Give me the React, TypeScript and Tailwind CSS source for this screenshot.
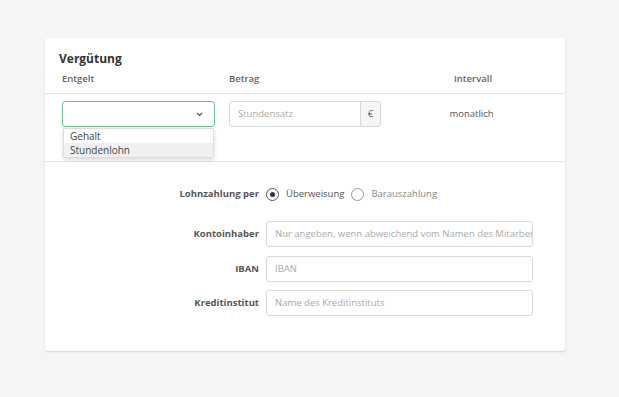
import React from "react";

const font = { fontFamily: '"Open Sans", "Noto Sans", sans-serif' };

const Radio: React.FC<{ checked?: boolean; label: string }> = ({ checked, label }) => (
  <label className="flex items-center gap-[7px]">
    <span
      className={
        "flex h-[13px] w-[13px] items-center justify-center rounded-full border " +
        (checked ? "border-[#555]" : "border-[#999]")
      }
    >
      {checked && <span className="h-[5px] w-[5px] rounded-full bg-[#333]" />}
    </span>
    <span className={checked ? "text-[#555]" : "text-[#888]"}>{label}</span>
  </label>
);

const Field: React.FC<{ label: string; placeholder: string; className?: string }> = ({
  label,
  placeholder,
  className,
}) => (
  <div className={"flex items-center " + (className ?? "")}>
    <div className="w-[221px] pr-[7px] text-right font-bold text-[#555]">{label}</div>
    <div className="flex h-[26px] w-[267px] items-center overflow-hidden whitespace-nowrap rounded-[3px] border border-[#d9d9d9] bg-white px-[8px] text-[#aaa]">
      {placeholder}
    </div>
  </div>
);

const App: React.FC = () => {
  return (
    <div className="h-[397px] w-[619px] overflow-hidden bg-[#f5f5f5] pt-[38px] pl-[45px] text-[9.5px]" style={font}>
      <div className="h-[313px] w-[520px] rounded-[3px] bg-white shadow-[0_1px_2px_rgba(0,0,0,0.15)]">
        <div className="border-b border-[#e3e3e3] px-[14px] pt-[11px] pb-[6px]">
          <h2 className="text-[12px] leading-[20px] font-bold text-[#333]">Vergütung</h2>
          <div className="mt-[2px] flex pl-[3px] leading-[16px] font-semibold text-[#666]">
            <div className="w-[167px]">Entgelt</div>
            <div className="w-[152px]">Betrag</div>
            <div className="flex-1 pl-[14px] text-center">Intervall</div>
          </div>
        </div>

        <div className="flex border-b border-[#e3e3e3] px-[17px] pt-[7px] pb-[34px]">
          <div className="relative w-[153px]">
            <div className="flex h-[26px] items-center justify-end rounded-[3px] border border-[#6cc08e] pr-[11px]">
              <svg width="7" height="5" viewBox="0 0 7 5" fill="none">
                <path d="M1 1l2.5 2.5L6 1" stroke="#555" strokeWidth="1.2" />
              </svg>
            </div>
            <div className="absolute top-[27px] right-[1px] left-[1px] z-10 rounded-b-[2px] border border-[#ddd] bg-white text-[10px] text-[#444] shadow-[0_2px_4px_rgba(0,0,0,0.15)]">
              <div className="px-[6px] leading-[14px]">Gehalt</div>
              <div className="bg-[#f0f0f0] px-[6px] leading-[14px]">Stundenlohn</div>
            </div>
          </div>
          <div className="ml-[14px] flex h-[26px] w-[152px]">
            <div className="flex flex-1 items-center rounded-l-[3px] border border-[#d9d9d9] px-[8px] text-[#aaa]">
              Stundensatz
            </div>
            <div className="flex w-[20px] items-center justify-center rounded-r-[3px] border border-l-0 border-[#d9d9d9] bg-[#f5f5f5] text-[#555]">
              €
            </div>
          </div>
          <div className="ml-[14px] flex h-[26px] flex-1 items-center justify-center text-[#555]">monatlich</div>
        </div>

        <div className="pt-[24px]">
          <div className="flex h-[16px] items-center">
            <div className="w-[221px] pr-[7px] text-right font-bold text-[#555]">Lohnzahlung per</div>
            <div className="flex items-center gap-[7px]">
              <Radio checked label="Überweisung" />
              <Radio label="Barauszahlung" />
            </div>
          </div>
          <Field className="mt-[19px]" label="Kontoinhaber" placeholder="Nur angeben, wenn abweichend vom Namen des Mitarbeiters" />
          <Field className="mt-[9px]" label="IBAN" placeholder="IBAN" />
          <Field className="mt-[8px]" label="Kreditinstitut" placeholder="Name des Kreditinstituts" />
        </div>
      </div>
    </div>
  );
};

export default App;
